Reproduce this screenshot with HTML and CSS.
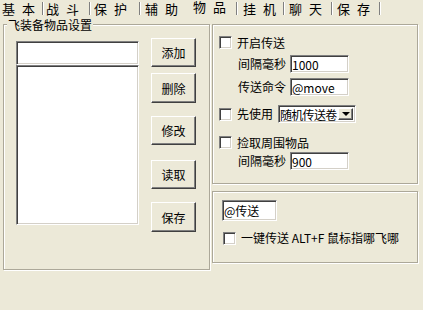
FILE: index.html
```html
<!DOCTYPE html>
<html lang="zh-CN">
<head>
    <meta charset="UTF-8">
    <title>物品</title>
    <link rel="stylesheet" href="styles.css">
</head>
<body>
    <div class="tabs">
        <div class="tab">基 本</div>
        <div class="tab">战 斗</div>
        <div class="tab">保 护</div>
        <div class="tab plain">辅 助</div>
        <div class="tab plain active">物 品</div>
        <div class="tab after-active">挂 机</div>
        <div class="tab">聊 天</div>
        <div class="tab">保 存</div>
    </div>

    <div class="main">
        <div class="group items">
            <span class="legend">飞装备物品设置</span>
            <div class="item-col">
                <input class="field item-name" type="text">
                <div class="field listbox"></div>
            </div>
            <div class="btn-col">
                <button class="btn">添加</button>
                <button class="btn">删除</button>
                <button class="btn">修改</button>
                <button class="btn">读取</button>
                <button class="btn">保存</button>
            </div>
        </div>

        <div class="side">
            <div class="group fly">
                <div class="row r1">
                    <input class="check" type="checkbox">
                    <span class="label">开启传送</span>
                </div>
                <div class="row r2 indent">
                    <span class="label">间隔毫秒</span>
                    <input class="field small" type="text" value="1000">
                </div>
                <div class="row r3 indent">
                    <span class="label">传送命令</span>
                    <input class="field small" type="text" value="@move">
                </div>
                <div class="row r4">
                    <input class="check" type="checkbox">
                    <span class="label">先使用</span>
                    <div class="field combo">
                        <span class="combo-text">随机传送卷</span>
                        <span class="combo-btn"><span class="arrow"></span></span>
                    </div>
                </div>
                <div class="row r5">
                    <input class="check" type="checkbox">
                    <span class="label">捡取周围物品</span>
                </div>
                <div class="row r6 indent">
                    <span class="label">间隔毫秒</span>
                    <input class="field small" type="text" value="900">
                </div>
            </div>

            <div class="group hotkey">
                <input class="field cmd" type="text" value="@传送">
                <div class="row hk-row">
                    <input class="check" type="checkbox">
                    <span class="label hk-label">一键传送 ALT+F 鼠标指哪飞哪</span>
                </div>
            </div>
        </div>
    </div>
</body>
</html>
```

FILE: styles.css
```css
body {
    margin: 0;
    width: 423px;
    height: 310px;
    overflow: hidden;
    background: #ece9d8;
    font-family: "Noto Sans CJK SC", sans-serif;
    font-size: 12px;
    color: #000;
}

/* tab strip */
.tabs {
    display: flex;
    align-items: flex-start;
    height: 18px;
    font-size: 13px;
}

.tab {
    flex-shrink: 0;
    box-sizing: border-box;
    height: 13px;
    margin-top: 2px;
    padding-left: 4px;
    line-height: 13px;
    white-space: nowrap;
    word-spacing: 4px;
    border-right: 1px solid #808080;
    box-shadow: 1px 0 0 #fff;
}

.tab:nth-child(1) { width: 43px; padding-left: 2px; }
.tab:nth-child(2) { width: 47px; padding-left: 3px; }
.tab:nth-child(3) { width: 50px; }
.tab:nth-child(4) { width: 47px; padding-left: 5px; }
.tab:nth-child(5) { width: 49px; padding-left: 6px; }
.tab:nth-child(6) { width: 48px; padding-left: 6px; }
.tab:nth-child(7) { width: 48px; padding-left: 5px; }
.tab:nth-child(8) { width: 48px; padding-left: 5px; }

.tab.plain {
    border-right: none;
    box-shadow: none;
}

.tab.active {
    height: 15px;
    margin-top: 0;
}

.tab.after-active {
    border-left: 1px solid #808080;
    box-shadow: inset 1px 0 0 #fff, 1px 0 0 #fff;
}

/* layout */
.main {
    display: flex;
    margin-top: 6px;
    padding-left: 3px;
}

.group {
    position: relative;
    box-sizing: border-box;
    border: 1px solid #aca899;
    box-shadow: inset 1px 1px 0 #fff, 1px 1px 0 #fff;
}

.legend {
    position: absolute;
    top: -7px;
    left: 3px;
    padding: 0 1px;
    line-height: 14px;
    background: #ece9d8;
}

.items {
    display: flex;
    align-items: flex-start;
    width: 207px;
    height: 246px;
    padding: 13px 0 0 12px;
}

.item-col {
    display: flex;
    flex-direction: column;
    width: 123px;
    margin-top: 3px;
}

.item-name {
    height: 24px;
}

.listbox {
    height: 160px;
    margin-top: 9px;
}

.btn-col {
    display: flex;
    flex-direction: column;
    margin-left: 12px;
}

.btn {
    box-sizing: border-box;
    width: 45px;
    height: 29px;
    margin: 0;
    padding: 0;
    font: inherit;
    color: #000;
    background: #ece9d8;
    border: 1px solid;
    border-color: #fff #404040 #404040 #fff;
    box-shadow: inset -1px -1px 0 #808080;
}

.btn:nth-child(2) { margin-top: 6px; height: 30px; }
.btn:nth-child(3) { margin-top: 13px; }
.btn:nth-child(4) { margin-top: 15px; }
.btn:nth-child(5) { margin-top: 13px; height: 30px; }

.side {
    display: flex;
    flex-direction: column;
    margin-left: 2px;
}

.fly {
    width: 206px;
    height: 160px;
    padding-left: 6px;
}

.hotkey {
    width: 206px;
    height: 72px;
    margin-top: 7px;
    padding: 8px 0 0 9px;
}

/* controls */
.field {
    box-sizing: border-box;
    margin: 0;
    padding: 0 1px;
    font: inherit;
    color: #000;
    background: #fff;
    outline: none;
    border: 1px solid;
    border-color: #808080 #fff #fff #808080;
    box-shadow: inset 1px 1px 0 #404040, inset -1px -1px 0 #d4d0c8;
}

.check {
    appearance: none;
    box-sizing: border-box;
    width: 13px;
    height: 13px;
    margin: 0;
    background: #fff;
    border: 1px solid;
    border-color: #808080 #fff #fff #808080;
    box-shadow: inset 1px 1px 0 #404040, inset -1px -1px 0 #d4d0c8;
}

.row {
    display: flex;
    align-items: center;
}

.row .label {
    margin-left: 5px;
    line-height: 14px;
    white-space: nowrap;
}

.indent {
    padding-left: 19px;
}

.indent .label {
    margin-left: 0;
    width: 52px;
}

.small {
    width: 59px;
    height: 18px;
}

.r1 { margin-top: 11px; height: 13px; }
.r2 { margin-top: 6px; height: 18px; }
.r3 { margin-top: 5px; height: 18px; }
.r4 { margin-top: 9px; height: 18px; }
.r5 { margin-top: 13px; height: 13px; }
.r6 { margin-top: 3px; height: 18px; }

.combo {
    display: flex;
    width: 78px;
    height: 18px;
    margin-left: 5px;
    padding: 2px 2px 2px 1px;
}

.combo-text {
    flex: 1;
    white-space: nowrap;
    line-height: 14px;
    letter-spacing: -0.7px;
}

.combo-btn {
    display: flex;
    align-items: center;
    justify-content: center;
    flex-shrink: 0;
    box-sizing: border-box;
    width: 15px;
    background: #ece9d8;
    border: 1px solid;
    border-color: #fff #404040 #404040 #fff;
    box-shadow: inset -1px -1px 0 #808080;
}

.arrow {
    width: 0;
    height: 0;
    border-left: 4px solid transparent;
    border-right: 4px solid transparent;
    border-top: 4px solid #000;
}

.cmd {
    width: 55px;
    height: 21px;
}

.hk-row {
    margin-top: 10px;
    padding-left: 1px;
}

.hk-label {
    margin-left: 4px;
}
```
